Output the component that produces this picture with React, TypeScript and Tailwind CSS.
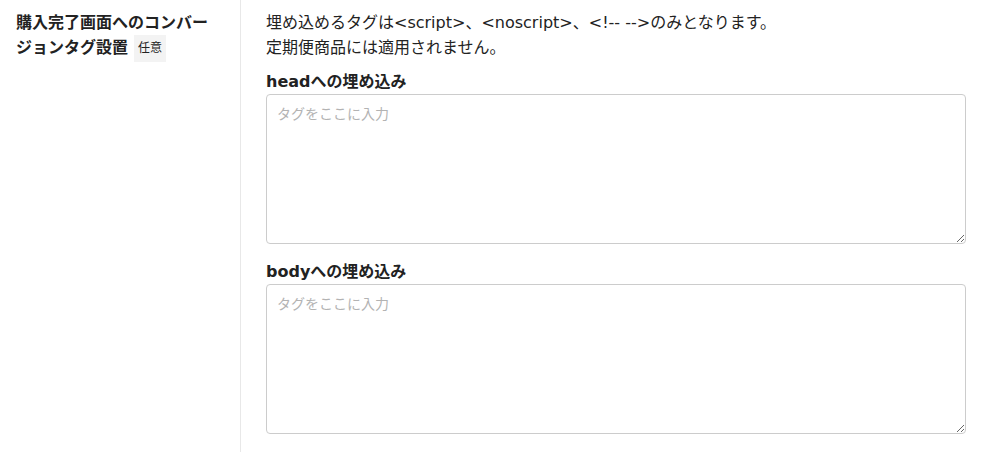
import React from 'react';

const font = { fontFamily: '"DejaVu Sans", "Noto Sans CJK JP", sans-serif' };

const TagField: React.FC<{ label: string; className?: string }> = ({ label, className }) => (
  <div className={className}>
    <div className="text-[16px] font-bold leading-[24px] text-[#222]">{label}</div>
    <textarea
      className="block w-[700px] h-[150px] rounded-[4px] border border-[#cccccc] px-[10px] py-[6px] text-[14px] leading-[24px] text-[#222] placeholder:text-[#b3b3b3] outline-none"
      style={{ fontFamily: '"Noto Sans CJK JP", sans-serif' }}
      placeholder="タグをここに入力"
    />
  </div>
);

export default function App() {
  return (
    <div className="flex min-h-[452px] bg-white text-[#222]" style={font}>
      {/* Label column */}
      <div className="w-[241px] shrink-0 border-r border-[#e8e8e8] pl-[16px] pr-[24px] pt-[10px]">
        <div className="text-[16px] font-bold leading-[25px]">
          購入完了画面へのコンバージョンタグ設置
          <span className="ml-[6px] inline-block bg-[#f3f3f3] px-[4px] py-[1px] text-[12px] font-normal leading-[25px] align-middle">
            任意
          </span>
        </div>
      </div>

      {/* Field column */}
      <div className="pl-[25px] pt-[10px]">
        <p className="text-[16px] leading-[25px]">
          埋め込めるタグは&lt;script&gt;、&lt;noscript&gt;、&lt;!-- --&gt;のみとなります。
          <br />
          定期便商品には適用されません。
        </p>
        <TagField label="headへの埋め込み" className="mt-[10px]" />
        <TagField label="bodyへの埋め込み" className="mt-[16px]" />
      </div>
    </div>
  );
}
